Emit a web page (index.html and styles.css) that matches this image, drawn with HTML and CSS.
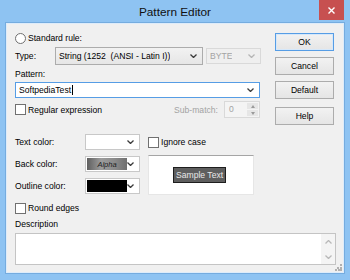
FILE: index.html
```html
<!DOCTYPE html>
<html lang="en">
  <head>
    <meta charset="UTF-8" />
    <meta name="viewport" content="width=device-width, initial-scale=1.0" />
    <title>Pattern Editor</title>
    <link rel="stylesheet" href="styles.css">
  </head>
  <body>
    <div class="window">
      <div class="titlebar">
        <span class="title">Pattern Editor</span>
        <span class="close">
          <svg width="7" height="7" viewBox="0 0 7 7"><path d="M0.5 0.5 L6.5 6.5 M6.5 0.5 L0.5 6.5" /></svg>
        </span>
      </div>

      <div class="client">
        <div class="top">
          <div class="form">
            <div class="row radio-row"><span class="radio"></span>Standard rule:</div>

            <div class="row type-row">
              <span class="type-label">Type:</span>
              <div class="combo list type-combo">
                <span class="combo-text">String (1252&nbsp; (ANSI - Latin I))</span>
                <svg class="chev" viewBox="0 0 7 4"><path d="M0.5 0.5 L3.5 3.5 L6.5 0.5" /></svg>
              </div>
              <div class="combo disabled byte-combo">
                <span class="combo-text">BYTE</span>
                <svg class="chev" viewBox="0 0 7 4"><path d="M0.5 0.5 L3.5 3.5 L6.5 0.5" /></svg>
              </div>
            </div>

            <div class="label pattern-label">Pattern:</div>
            <div class="combo edit focused pattern-combo">
              <span class="combo-text">SoftpediaTest<i class="caret"></i></span>
              <svg class="chev" viewBox="0 0 7 4"><path d="M0.5 0.5 L3.5 3.5 L6.5 0.5" /></svg>
            </div>

            <div class="row regex-row">
              <div class="check-row"><span class="check"></span>Regular expression</div>
              <div class="submatch">
                <span class="muted">Sub-match:</span>
                <div class="spin">
                  <span class="spin-value">0</span>
                  <div class="spin-btns">
                    <span class="spin-up"></span>
                    <span class="spin-down"></span>
                  </div>
                </div>
              </div>
            </div>
          </div>

          <div class="buttons">
            <button class="btn default">OK</button>
            <button class="btn">Cancel</button>
            <button class="btn">Default</button>
            <button class="btn help">Help</button>
          </div>
        </div>

        <div class="colors">
          <span class="color-label">Text color:</span>
          <div class="color-combo">
            <span class="swatch white"></span>
            <svg class="chev" viewBox="0 0 7 4"><path d="M0.5 0.5 L3.5 3.5 L6.5 0.5" /></svg>
          </div>
          <div class="check-row ignore"><span class="check"></span>Ignore case</div>

          <span class="color-label">Back color:</span>
          <div class="color-combo">
            <span class="swatch alpha">Alpha</span>
            <svg class="chev" viewBox="0 0 7 4"><path d="M0.5 0.5 L3.5 3.5 L6.5 0.5" /></svg>
          </div>
          <div class="sample">
            <span class="sample-text">Sample Text</span>
          </div>

          <span class="color-label">Outline color:</span>
          <div class="color-combo">
            <span class="swatch black"></span>
            <svg class="chev" viewBox="0 0 7 4"><path d="M0.5 0.5 L3.5 3.5 L6.5 0.5" /></svg>
          </div>
        </div>

        <div class="check-row round"><span class="check"></span>Round edges</div>

        <div class="label desc-label">Description</div>
        <div class="desc">
          <div class="desc-text"></div>
          <div class="vscroll">
            <svg class="chev up" viewBox="0 0 7 4"><path d="M0.5 3.5 L3.5 0.5 L6.5 3.5" /></svg>
            <svg class="chev" viewBox="0 0 7 4"><path d="M0.5 0.5 L3.5 3.5 L6.5 0.5" /></svg>
          </div>
        </div>

        <svg class="grip" width="7" height="7" viewBox="0 0 7 7">
          <rect x="5" y="0" width="2" height="2" />
          <rect x="2" y="3" width="2" height="2" />
          <rect x="5" y="3" width="2" height="2" />
          <rect x="0" y="5" width="2" height="2" />
          <rect x="3" y="5" width="2" height="2" />
          <rect x="5" y="5" width="2" height="2" />
        </svg>
      </div>
    </div>
  </body>
</html>
```

FILE: styles.css
```css
body {
  margin: 0;
  width: 350px;
  height: 280px;
  overflow: hidden;
  background-color: rgb(142, 195, 242);
  font-family: "Liberation Sans", Arial, sans-serif;
  font-size: 8.6px;
  color: #000;
}

.titlebar {
  position: relative;
  height: 23px;
  display: flex;
  justify-content: center;
  align-items: center;
}

.title {
  font-size: 11.8px;
  color: #111;
  padding-top: 1px;
}

.close {
  position: absolute;
  top: 0;
  right: 6px;
  width: 25px;
  height: 20px;
  display: flex;
  justify-content: center;
  align-items: center;
  background-color: rgb(199, 80, 80);
}

.close path {
  stroke: #fff;
  stroke-width: 1.4;
  fill: none;
}

.client {
  position: relative;
  box-sizing: border-box;
  height: 250px;
  margin: 0 6px;
  padding: 8px 9px 8px 8px;
  border: 1px solid rgb(222, 236, 250);
  box-shadow: 0 0 0 1px rgb(117, 172, 223);
  background-color: #f0f0f0;
}

/* top part: form + buttons */

.top {
  display: flex;
  justify-content: space-between;
  height: 93px;
}

.form {
  width: 247px;
  display: flex;
  flex-direction: column;
}

.row {
  display: flex;
  align-items: center;
}

.radio-row {
  height: 12px;
}

.radio {
  box-sizing: border-box;
  width: 11px;
  height: 11px;
  margin-right: 2px;
  border: 1px solid #707070;
  border-radius: 50%;
  background-color: #fff;
}

.type-row {
  height: 18px;
  margin-top: 3px;
}

.type-label {
  width: 40px;
}

.combo {
  box-sizing: border-box;
  display: flex;
  align-items: center;
  justify-content: space-between;
  padding: 0 5px 0 3px;
  border: 1px solid #acacac;
}

.combo-text {
  white-space: nowrap;
  overflow: hidden;
}

.list {
  background: linear-gradient(#f2f2f2, #e6e6e6);
}

.type-combo {
  width: 148px;
  height: 18px;
}

.byte-combo {
  width: 55px;
  height: 16px;
  margin-left: 3px;
}

.disabled {
  border-color: #d9d9d9;
  background-color: #efefef;
  color: #a3a3a3;
}

.disabled .chev path {
  stroke: #b5b5b5;
}

.chev {
  width: 7px;
  height: 4px;
  flex-shrink: 0;
}

.chev path {
  stroke: #3a3a3a;
  stroke-width: 1.3;
  fill: none;
}

.label {
  height: 11px;
  line-height: 11px;
}

.pattern-label {
  margin-top: 4px;
}

.pattern-combo {
  width: 245px;
  height: 16px;
  margin-top: 2px;
  background-color: #fff;
}

.focused {
  border-color: rgb(86, 157, 229);
}

.caret {
  display: inline-block;
  width: 1px;
  height: 10px;
  margin-left: 1px;
  vertical-align: -2px;
  background-color: #000;
}

.regex-row {
  width: 245px;
  height: 17px;
  margin-top: 3px;
  justify-content: space-between;
}

.check-row {
  display: flex;
  align-items: center;
  height: 12px;
}

.check {
  box-sizing: border-box;
  width: 11px;
  height: 11px;
  margin-right: 2px;
  border: 1px solid #707070;
  background-color: #fff;
}

.submatch {
  display: flex;
  align-items: center;
}

.muted {
  color: #a3a3a3;
  margin-right: 6px;
}

.spin {
  box-sizing: border-box;
  width: 36px;
  height: 17px;
  display: flex;
  justify-content: space-between;
  padding: 1px 1px 1px 4px;
  border: 1px solid #d9d9d9;
  background-color: #f4f4f4;
  color: #a3a3a3;
}

.spin-value {
  line-height: 13px;
}

.spin-btns {
  width: 11px;
  display: flex;
  flex-direction: column;
  gap: 1px;
}

.spin-up,
.spin-down {
  flex: 1;
  display: flex;
  justify-content: center;
  align-items: center;
  background-color: #e6e6e6;
}

.spin-up::after,
.spin-down::after {
  content: "";
  border-left: 2.5px solid transparent;
  border-right: 2.5px solid transparent;
}

.spin-up::after {
  border-bottom: 3px solid #9a9a9a;
}

.spin-down::after {
  border-top: 3px solid #9a9a9a;
}

.buttons {
  width: 59px;
  padding-top: 1px;
  display: flex;
  flex-direction: column;
  gap: 6px;
}

.btn {
  height: 18px;
  padding: 0;
  border: 1px solid #acacac;
  background: linear-gradient(#f2f2f2, #e5e5e5);
  font-family: inherit;
  font-size: 8.6px;
  color: #000;
}

.btn.default {
  border-color: rgb(86, 157, 229);
  box-shadow: inset 0 0 0 1px rgb(214, 232, 250);
}

.btn.help {
  margin-top: 2px;
}

/* colours */

.colors {
  display: grid;
  grid-template-columns: 70px 63px 1fr;
  grid-template-rows: 16px 16px 16px;
  row-gap: 6px;
  align-items: center;
  margin-top: 9px;
}

.color-combo {
  box-sizing: border-box;
  width: 55px;
  height: 16px;
  display: flex;
  align-items: center;
  justify-content: space-between;
  padding: 1px 5px 1px 1px;
  border: 1px solid #c8c8c8;
  background-color: #fff;
}

.swatch {
  width: 40px;
  height: 12px;
}

.swatch.white {
  background-color: #fff;
}

.swatch.black {
  background-color: #000;
}

.swatch.alpha {
  display: flex;
  justify-content: center;
  align-items: center;
  font-size: 7.5px;
  font-style: italic;
  color: #222;
  background: linear-gradient(90deg, #5f5f5f, #9c9c9c 35%, #8a8a8a 70%, #6f6f6f);
}

.ignore {
  align-self: center;
}

.sample {
  grid-column: 3;
  grid-row: 2 / span 2;
  box-sizing: border-box;
  width: 106px;
  height: 40px;
  display: flex;
  align-items: center;
  padding-left: 24px;
  border: 1px solid #e6e6e6;
  border-top-color: #a5a5a5;
  background-color: #fff;
}

.sample-text {
  padding: 2px;
  border: 1px solid #1e1e1e;
  background-color: #5e5e5e;
  color: #e8e8e8;
  line-height: 10px;
}

.round {
  margin-top: 8px;
}

.desc-label {
  margin-top: 5px;
}

.desc {
  box-sizing: border-box;
  width: 321px;
  height: 32px;
  margin-top: 3px;
  display: flex;
  border: 1px solid #c4c4c4;
  background-color: #fff;
}

.desc-text {
  flex: 1;
}

.vscroll {
  width: 14px;
  display: flex;
  flex-direction: column;
  justify-content: space-around;
  align-items: center;
  background-color: #f4f4f4;
}

.vscroll .chev path {
  stroke: #b8b8b8;
}

.grip {
  position: absolute;
  right: 1px;
  bottom: 1px;
  fill: #b0b0b0;
}
```
